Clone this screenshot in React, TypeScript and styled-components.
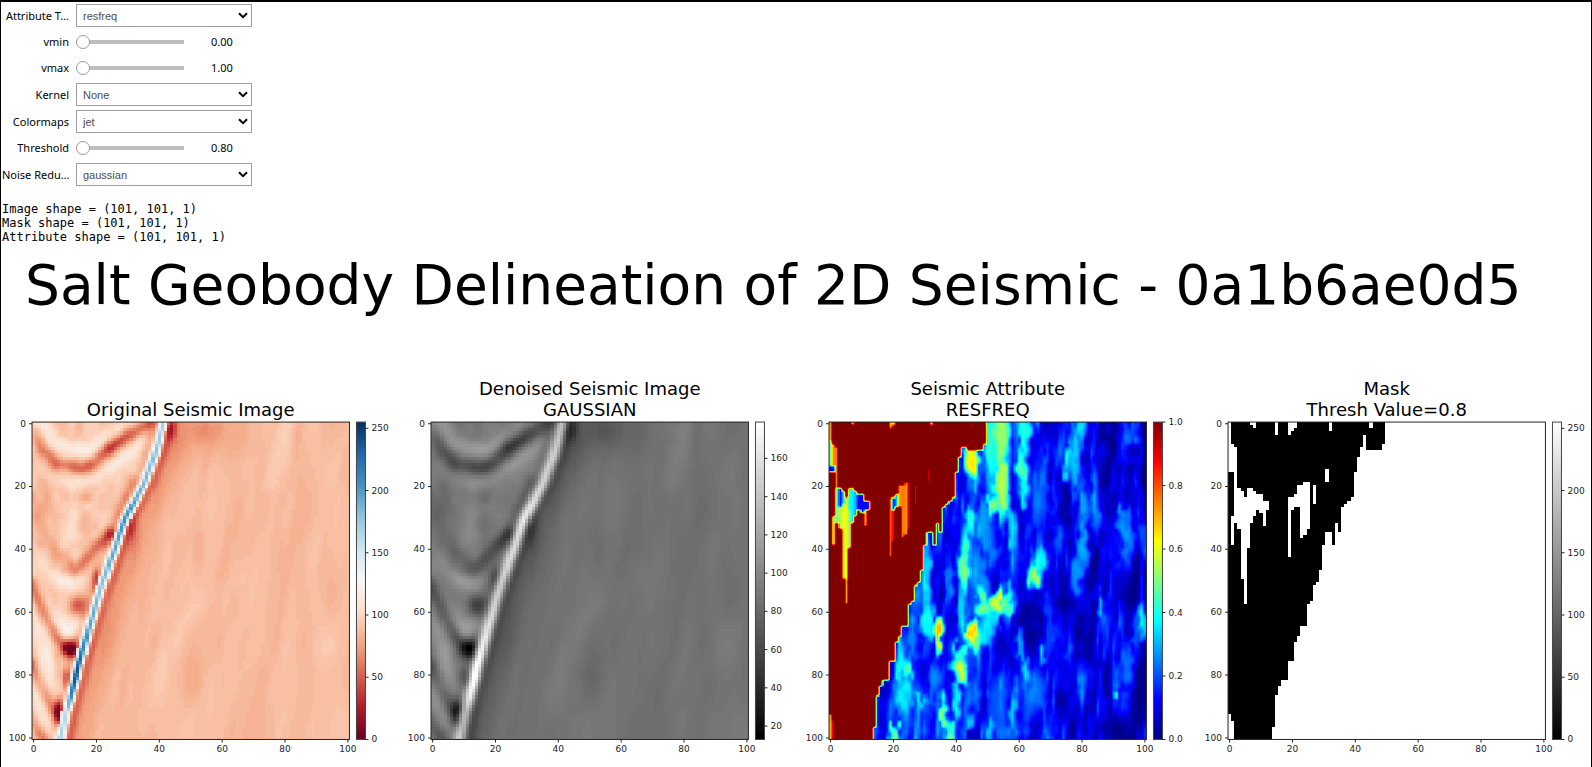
import React, { useState } from 'react';
import styled, { createGlobalStyle } from 'styled-components';

const GlobalStyle = createGlobalStyle`
  * { box-sizing: border-box; }
  body { margin: 0; background: #fff; color: #000; overflow-x: hidden; }
`;

const Page = styled.main`
  border: 1px solid #000;
  border-top-width: 2px;
  border-bottom: 0;
  min-height: 100vh;
`;

const Controls = styled.form`
  display: flex;
  flex-direction: column;
  gap: 4px;
  padding: 2px 0 0 1px;
`;

const ControlRow = styled.div<{ $slider?: boolean }>`
  display: flex;
  align-items: center;
  height: ${(p) => (p.$slider ? 22 : 23)}px;
`;

const ControlLabel = styled.label`
  width: 67px;
  margin-right: 7px;
  font: 11px/22px 'Noto Sans', sans-serif;
  text-align: right;
  white-space: nowrap;
`;

const SelectBox = styled.div`
  position: relative;
  width: 176px;
  height: 23px;
`;

const Select = styled.select`
  appearance: none;
  width: 100%;
  height: 100%;
  padding: 0 24px 0 6px;
  border: 1px solid #9e9e9e;
  border-radius: 0;
  background: #fff;
  color: #4d4d4d;
  font: 11px 'Liberation Sans', Arial, sans-serif;
`;

const Chevron = styled.svg`
  position: absolute;
  top: 8px;
  right: 4px;
  width: 10px;
  height: 7px;
  pointer-events: none;
`;

const Slider = styled.input`
  appearance: none;
  width: 108px;
  height: 14px;
  margin: 0;
  background: linear-gradient(#bdbdbd, #bdbdbd) center / 100% 4px no-repeat;
  &::-webkit-slider-thumb {
    appearance: none;
    width: 14px;
    height: 14px;
    border: 1px solid #9e9e9e;
    border-radius: 50%;
    background: #fff;
  }
`;

const Readout = styled.output`
  width: 76px;
  font: 11px/22px 'Noto Sans', sans-serif;
  text-align: center;
`;

const Log = styled.pre`
  margin: 16px 0 0 1px;
  font: 12px/14px 'DejaVu Sans Mono', monospace;
`;

const Title = styled.h1`
  margin: 8px 0 0 24px;
  font: 400 55px/66px 'DejaVu Sans', sans-serif;
  white-space: nowrap;
`;

const Figures = styled.section`
  display: grid;
  grid-template-columns: repeat(4, minmax(0, 1fr));
  gap: 4px;
  margin-top: 56px;
`;

const Figure = styled.svg`
  display: block;
  width: 100%;
  overflow: visible;
  font-family: 'DejaVu Sans', sans-serif;
`;

/* ---------- colour maps ---------- */

type Rgb = [number, number, number];
type ColorMap = (t: number) => Rgb;
const clamp = (v: number) => Math.max(0, Math.min(1, v));

const RDBU: Rgb[] = [
  [103, 0, 31], [178, 24, 43], [214, 96, 77], [244, 165, 130], [253, 219, 199], [247, 247, 247],
  [209, 229, 240], [146, 197, 222], [67, 147, 195], [33, 102, 172], [5, 48, 97],
];
const rdbu: ColorMap = (t) => {
  const p = clamp(t) * 10;
  const i = Math.min(9, Math.floor(p));
  return RDBU[i].map((c, k) => Math.round(c + (RDBU[i + 1][k] - c) * (p - i))) as Rgb;
};
const gray: ColorMap = (t) => {
  const g = Math.round(clamp(t) * 255);
  return [g, g, g];
};
const jet: ColorMap = (t) => {
  const v = clamp(t);
  const ramp = (peak: number) => Math.round(255 * clamp(1.5 - Math.abs(4 * v - peak)));
  return [ramp(3), ramp(2), ramp(1)];
};
const css = (c: Rgb) => `rgb(${c.join(',')})`;

/* ---------- data ---------- */

const N = 101;
type Grid = number[][];
type Knot = [number, number, number];
type Spot = [number, number, number, number, number];

const build = (f: (x: number, y: number) => number, n = N): Grid =>
  Array.from({ length: n }, (_, r) => Array.from({ length: n }, (_, c) => f(c, r)));

const hash = (x: number, y: number, s: number) => {
  const v = Math.sin(x * 127.1 + y * 311.7 + s * 74.7) * 43758.5453;
  return v - Math.floor(v);
};
const noise = (x: number, y: number, s: number) => {
  const xi = Math.floor(x), yi = Math.floor(y);
  const ease = (t: number) => t * t * (3 - 2 * t);
  const fx = ease(x - xi), fy = ease(y - yi);
  const a = hash(xi, yi, s) * (1 - fx) + hash(xi + 1, yi, s) * fx;
  const b = hash(xi, yi + 1, s) * (1 - fx) + hash(xi + 1, yi + 1, s) * fx;
  return a * (1 - fy) + b * fy;
};

// Amplitude of a ridge that follows a polyline of [x, y, amplitude] knots.
const ridge = (x: number, y: number, knots: Knot[], sigma: number) => {
  let best = Infinity, amp = 0;
  for (let i = 0; i < knots.length - 1; i++) {
    const [ax, ay, aa] = knots[i];
    const [bx, by, ba] = knots[i + 1];
    const dx = bx - ax, dy = by - ay;
    const t = clamp(((x - ax) * dx + (y - ay) * dy) / (dx * dx + dy * dy));
    const d = (x - ax - t * dx) ** 2 + (y - ay - t * dy) ** 2;
    if (d < best) { best = d; amp = aa + (ba - aa) * t; }
  }
  return amp * Math.exp(-best / (2 * sigma * sigma));
};
const spot = (x: number, y: number, [cx, cy, a, sx, sy]: Spot) =>
  a * Math.exp(-((x - cx) ** 2) / (2 * sx * sx) - (y - cy) ** 2 / (2 * sy * sy));
// Flat-topped variant of a spot.
const plateau = (x: number, y: number, [cx, cy, a, sx, sy]: Spot) => {
  const q = ((x - cx) / (1.7 * sx)) ** 2 + ((y - cy) / (1.7 * sy)) ** 2;
  return a * Math.exp(-(q ** 1.6));
};

const FAULT: Knot[] = [
  [41.8, 0, 80], [39.5, 9, 95], [35.7, 19.5, 100], [29.4, 31.2, 125], [26.2, 40.7, 105], [21.6, 53.5, 95],
  [18, 66, 112], [15.2, 75.7, 145], [13.9, 81, 160], [12.4, 87, 130], [10.8, 92.7, 75], [9, 101, 85],
];
const shifted = (dx: number, amp: number): Knot[] => FAULT.map(([x, y]) => [x + dx, y, amp]);

const REFLECTORS: [Knot[], number][] = [
  [[[2.9, 0, 26], [6.6, 6.3, 20], [11.9, 8.6, 28], [17.7, 9, 30], [21.4, 6.3, 20], [25.7, 3, 14], [30, 0, 10]], 1.7],
  [[[1.5, 3.6, -15], [3.4, 9, -28], [7.6, 13.2, -34], [12, 14, -32], [16.1, 15, -40], [20.4, 12.4, -36], [24.6, 8.4, -56], [30, 4.7, -46], [37.3, 0.5, -36]], 1.5],
  [[[2, 14, 2], [6.6, 18, 8], [13, 19.5, 12], [20.4, 18, 12], [24.6, 14.7, 20], [32, 9.6, 20], [34.5, 6, 16]], 1.4],
  [[[32, 19, -22], [28, 27, -14], [25, 34, -8]], 1.4],
  [[[4, 20, -8], [5, 29, -8]], 1.5],
  [[[13, 28, 5], [12, 38, 8]], 1.6],
  [[[0, 24, -14], [1.8, 31, -14], [5.5, 38.6, -12], [9.8, 44, -12], [14, 47, -34], [17.2, 44, -34], [21.4, 39, -36], [25, 35.8, -56]], 1.5],
  [[[0, 40, 6], [4.5, 47, 8], [8.7, 50.3, 22], [14, 52, 14], [18.2, 47.5, 8], [22.5, 43, 6]], 1.6],
  [[[0, 47, 4], [2.3, 53.4, 8], [6.6, 62, 14], [11.4, 66.5, 28], [15, 64, 18]], 1.6],
  [[[0, 51.3, -36], [3.4, 59.8, -30], [7.1, 67.3, -28], [11, 72, -36]], 1.3],
  [[[0, 60, 16], [2.3, 68, 20], [5.5, 78, 20], [9, 86, 16]], 1.8],
  [[[0, 76.8, -34], [2.9, 85, -28], [6.6, 91.7, -28], [8.7, 94, -24]], 1.3],
  [[[0, 84, 10], [2.9, 91.6, 14], [7, 100, 16]], 1.6],
  [[[0, 94, -12], [3.4, 101, -34]], 1.2],
  [[[80.5, 0, 9], [79, 10, 8], [76.5, 20, 6]], 2],
  [[[58, 54, 2], [48, 63, 4], [41.6, 76, 6], [36, 98, 4]], 2],
  [shifted(2.8, -28), 1.1],
  [shifted(6, -12), 2.8],
  [shifted(-2.8, -12), 1.1],
];
const SPOTS: Spot[] = [
  [16, 24, -14, 2.5, 1], [16, 33, -10, 1.6, 2], [20.4, 50.8, -48, 1, 3], [14.5, 58.2, -46, 2, 2],
  [12.4, 72.3, -95, 1.9, 1.9], [8.7, 92.2, -78, 1.1, 2.6], [44.3, 2.8, -28, 1.2, 2.2], [31.5, 34, -22, 1.6, 4],
  [11, 82, -38, 0.8, 3], [55, 2.5, -15, 3, 3], [47, 6, -8, 7, 6], [64, 4, -5, 8, 5], [66, 48, 6, 2, 5], [49, 49, 5, 2, 9],
  [51, 81, -6, 2.5, 6], [93.5, 52, -5, 2, 9], [53, 40, -5, 1.3, 6], [42.6, 53.5, -5, 1.6, 4], [84, 3.6, -6, 1.2, 4],
  [3, 84, 10, 2, 5], [8, 80, -12, 1, 4],
];

const seismic = build((c, r) => {
  const x = c + 0.5, y = r + 0.5;
  let v = 87 + (noise((x + y * 0.15) / 2.6, y / 14, 2) - 0.5) * 6 + (noise((x + y * 0.12) / 6, y / 24, 5) - 0.5) * 6;
  v += x > 80 ? 1 : 0;
  if (x < 41 - y * 0.33) v += 6 + (noise(x / 2.5, y / 3, 8) - 0.5) * 10;
  REFLECTORS.forEach(([k, s]) => { v += ridge(x, y, k, s); });
  SPOTS.forEach((s) => { v += spot(x, y, s); });
  const f = ridge(x, y, FAULT, 0.85);
  return Math.max(2, Math.min(255, Math.max(v, f > 22 ? 86 : 0) + f));
});

const KERNEL = [-2, -1, 0, 1, 2].map((d) => Math.exp((-d * d) / 2));
const denoised = build((c, r) => {
  let sum = 0, weight = 0;
  for (let dy = -2; dy <= 2; dy++) for (let dx = -2; dx <= 2; dx++) {
    const row = seismic[Math.max(0, Math.min(N - 1, r + dy))];
    const w = KERNEL[dx + 2] * KERNEL[dy + 2];
    sum += w * row[Math.max(0, Math.min(N - 1, c + dx))];
    weight += w;
  }
  return sum / weight;
});

// Right edge of the salt body: [first row below, column].
const EDGE: [number, number][] = [
  [8, 43], [11, 42], [16, 41], [24, 40], [25, 39], [26, 38], [27, 37], [35, 36], [37, 31], [39, 31], [47, 30], [51, 29],
  [52, 28], [57, 27], [58, 26], [65, 25], [68, 23], [70, 22], [76, 21], [82, 19], [84, 17], [87, 16], [97, 15], [101, 14],
];
// Gaps inside the salt body: [column, columns, first row, end row, attribute value].
const GAPS: [number, number, number, number, number][] = [
  [0, 1, 0, 6, 0.72], [0, 1, 6, 14, 0.5], [0, 2, 14, 16, 0.12], [1, 1, 7, 14, 0.74], [2, 1, 8, 21, 0.76], [2, 1, 21, 32, 0.5],
  [1, 1, 30, 39, 0.5], [3, 1, 21, 27, 0.12], [3, 1, 27, 34, 0.55], [4, 1, 22, 26, 0.35], [4, 1, 26, 50, 0.62],
  [5, 1, 24, 50, 0.6], [5, 1, 50, 58, 0.72], [6, 1, 21, 28, 0.38], [6, 1, 28, 40, 0.5], [7, 1, 21, 32, 0.36],
  [8, 1, 22, 30, 0.3], [9, 1, 23, 28, 0.12], [10, 1, 23, 29, 0.12], [11, 1, 25, 28, 0.1], [11, 1, 28, 33, 0.65],
  [12, 1, 25, 28, 0.15], [7, 1, 0, 1, 0.7], [8, 1, 0, 2, 1], [15, 1, 0, 4, 1], [19, 1, 0, 2, 0.7], [19, 1, 2, 4, 1],
  [20, 1, 0, 1, 0.6], [20, 1, 1, 3, 1], [21, 1, 0, 2, 1], [32, 1, 0, 1, 0.6], [32, 1, 1, 3, 1], [45, 1, 0, 2, 0.95],
  [31, 1, 15, 19, 0.93], [19, 1, 24, 43, 0.8], [20, 1, 24, 28, 0.1], [20, 1, 28, 38, 0.9], [21, 1, 23, 27, 0.32],
  [22, 1, 20, 27, 0.72], [23, 1, 20, 37, 0.76], [24, 1, 19, 36, 0.74], [25, 1, 19, 34, 1], [27, 1, 20, 26, 0.92],
  [0, 1, 93, 101, 0.7], [1, 1, 95, 101, 0.98],
];
const inSalt = (c: number, r: number) => {
  if (r < 9 && c >= 44 && c < (r < 7 ? 50 : 49)) return true;
  if (r < 4 && c < 50) return true;
  if (c === 34 && r >= 32) return false;
  if (c === 33 && r >= 35 && r < 39) return true;
  const step = EDGE.find(([end]) => r < end);
  return !!step && c < step[1];
};
const gapAt = (c: number, r: number) => GAPS.find(([g, w, a, b]) => c >= g && c < g + w && r >= a && r < b);
const hidden = (c: number, r: number) => c === 20 && r >= 28;
const mask = build((c, r) => (inSalt(c, r) && (!gapAt(c, r) || hidden(c, r)) ? 0 : 1));

const PATCHES: Spot[] = [
  [45.3, 13.2, 0.6, 1.3, 4], [54.8, 2, 0.5, 2, 9], [54.8, 18, 0.52, 1.6, 8], [52.3, 27, 0.46, 1.5, 2.2], [51.5, 6, 0.36, 1.5, 14],
  [62.3, 4, 0.38, 1.2, 7], [61.5, 14, 0.42, 1.2, 5], [62, 22, 0.34, 1.2, 3], [77.8, 12, 0.3, 1.1, 8], [80, 2.5, 0.3, 1.2, 4], [75.6, 14, 0.38, 1, 3],
  [58.6, 34, 0.32, 1.1, 4], [57.5, 29, 0.28, 1, 3], [43, 46, 0.42, 1.1, 7], [44.8, 31, 0.32, 1, 4], [65.5, 49.5, 0.5, 1.5, 3],
  [67, 44, 0.32, 1.3, 3], [53.8, 57.5, 0.58, 2, 2], [57, 57, 0.38, 1.4, 3], [49, 56, 0.44, 1.8, 2.6], [51, 60, 0.32, 3, 3],
  [45.3, 67, 0.6, 1.2, 2.6], [47.2, 70.5, 0.46, 0.9, 3], [34.7, 67.5, 0.66, 0.8, 3.4], [42, 79.5, 0.52, 1.4, 2.6], [41.5, 76, 0.4, 1.8, 3],
  [40.5, 88, 0.32, 0.9, 5], [25.3, 78.5, 0.44, 1.2, 3], [36.3, 91.7, 0.46, 1, 3], [38.4, 99, 0.4, 0.8, 2], [23.5, 87, 0.3, 1.8, 5],
  [29, 88.5, 0.27, 2.4, 2], [21, 99.5, 0.42, 1.5, 1.8], [31.3, 63, 0.34, 1.5, 5], [31, 48, 0.3, 0.9, 9],
  [22.5, 75, 0.32, 0.9, 8], [50, 66, 0.32, 1.4, 5], [51, 37, 0.22, 1.6, 7], [48.5, 32, 0.24, 1.2, 5], [81, 40, 0.26, 1.1, 7], [79, 48, 0.22, 2, 4],
  [93.5, 31, 0.22, 1.6, 3], [95.3, 39, 0.22, 1.3, 5], [95.8, 3.6, 0.2, 1.8, 3],
  [85, 25, 0.22, 1, 7], [100, 63, 0.36, 0.9, 4], [86, 59, 0.26, 0.8, 2.2], [91, 85, 0.32, 0.8, 1],
  [94.7, 77, 0.22, 1.4, 5], [68, 75, 0.3, 0.8, 2], [63, 79, 0.27, 0.9, 3], [61, 72, 0.26, 0.9, 3],
  [66, 86, 0.2, 2, 6], [59, 91.7, 0.26, 0.8, 6], [70, 64, 0.17, 1.2, 8], [51, 98, 0.28, 0.8, 3],
  [44.8, 95, 0.3, 0.8, 2.4], [67, 22, 0.18, 2, 9], [42, 60, 0.3, 0.9, 6], [48, 49, 0.22, 2, 5], [54, 92, 0.17, 2, 8],
  [26.5, 68, 0.2, 1.2, 6], [38, 50, 0.2, 0.8, 6], [34, 82, 0.18, 1.6, 5], [47, 17, 0.26, 1, 4],
];
const attribute = build((c, r) => {
  if (inSalt(c, r) || (r < 8 && c === 43)) {
    const gap = gapAt(c, r);
    return gap ? gap[4] : 1.15;
  }
  const x = c + 0.5, y = r + 0.5;
  const streak = noise((x + y * 0.06) / 1.3, y / 9, 11);
  const wide = noise(x / 3.5, y / 14, 3);
  let v = 0.01 + streak * streak * 0.18 + wide * wide * 0.14 + (noise(x / 1.4, y / 2.4, 7) - 0.5) * 0.07;
  if (x < 60) v += 0.04;
  if (x > 88) v -= 0.03;
  // The outlines of the patches are roughened with fine noise.
  const wx = x + (noise(x / 2, y / 3, 21) - 0.5) * 2;
  const wy = y + (noise(x / 1.4, y / 3, 22) - 0.5) * 7;
  const peak = PATCHES.reduce((m, p) => Math.max(m, plateau(wx, wy, p)), 0);
  return Math.max(0.01, Math.min(0.72, Math.max(v, peak + v * 0.4)));
});

// Bilinear resampling to `k` samples per cell.
const upsample = (g: Grid, k: number): Grid =>
  build((c, r) => {
    const x = Math.max(0, Math.min(N - 1, (c + 0.5) / k - 0.5));
    const y = Math.max(0, Math.min(N - 1, (r + 0.5) / k - 0.5));
    const xi = Math.min(N - 2, Math.floor(x)), yi = Math.min(N - 2, Math.floor(y));
    const fx = x - xi, fy = y - yi;
    return (g[yi][xi] * (1 - fx) + g[yi][xi + 1] * fx) * (1 - fy) + (g[yi + 1][xi] * (1 - fx) + g[yi + 1][xi + 1] * fx) * fy;
  }, N * k);

// One path for each colour level, made of horizontal runs of cells.
const LEVELS = 96;
const toPaths = (g: Grid, min: number, max: number, map: ColorMap) => {
  const paths: string[] = Array(LEVELS).fill('');
  const level = (v: number) => Math.round(clamp((v - min) / (max - min)) * (LEVELS - 1));
  g.forEach((row, r) => {
    let start = 0;
    for (let c = 1; c <= row.length; c++) {
      if (c === row.length || level(row[c]) !== level(row[start])) {
        paths[level(row[start])] += `M${start} ${r}H${c}V${r + 1}H${start}z`;
        start = c;
      }
    }
  });
  return paths.map((d, i) => ({ d, fill: css(map(i / (LEVELS - 1))) })).filter((p) => p.d);
};

interface Plot {
  title: string[];
  paths: { d: string; fill: string }[];
  cells: number;
  map: ColorMap;
  min: number;
  max: number;
  ticks: string[];
}

const PLOTS: Plot[] = [
  { title: ['Original Seismic Image'], paths: toPaths(seismic, 0, 255, rdbu), cells: N, map: rdbu, min: 0, max: 255, ticks: ['0', '50', '100', '150', '200', '250'] },
  { title: ['Denoised Seismic Image', 'GAUSSIAN'], paths: toPaths(denoised, 13, 179, gray), cells: N, map: gray, min: 13, max: 179, ticks: ['20', '40', '60', '80', '100', '120', '140', '160'] },
  { title: ['Seismic Attribute', 'RESFREQ'], paths: toPaths(upsample(attribute, 3), 0, 1, jet), cells: N * 3, map: jet, min: 0, max: 1, ticks: ['0.0', '0.2', '0.4', '0.6', '0.8', '1.0'] },
  { title: ['Mask', 'Thresh Value=0.8'], paths: toPaths(mask, 0, 1, gray), cells: N, map: gray, min: 0, max: 255, ticks: ['0', '50', '100', '150', '200', '250'] },
];

const LEFT = 31;
const TOP = 48;
const SIZE = 317;
const BAR = 355;
const AXIS = [0, 20, 40, 60, 80, 100];

function PlotFigure({ plot, id }: { plot: Plot; id: string }) {
  const at = (v: number) => ((v + 0.5) / N) * SIZE;
  const bottom = TOP + SIZE;
  return (
    <Figure viewBox="0 0 394 394" role="img" aria-label={plot.title.join(' ')}>
      <defs>
        <linearGradient id={id} x1="0" y1="1" x2="0" y2="0">
          {Array.from({ length: 33 }, (_, i) => (
            <stop key={i} offset={i / 32} stopColor={css(plot.map(i / 32))} />
          ))}
        </linearGradient>
      </defs>
      {plot.title.map((line, i) => (
        <text key={line} x={LEFT + SIZE / 2} y={TOP - 6 - 21 * (plot.title.length - 1 - i)} fontSize={18} textAnchor="middle">{line}</text>
      ))}
      <svg x={LEFT} y={TOP} width={SIZE} height={SIZE} viewBox={`0 0 ${plot.cells} ${plot.cells}`} shapeRendering="crispEdges">
        {plot.paths.map((p) => <path key={p.fill} d={p.d} fill={p.fill} />)}
      </svg>
      <rect x={LEFT} y={TOP} width={SIZE} height={SIZE} fill="none" stroke="#222" strokeWidth={1} />
      <rect x={BAR} y={TOP} width={9} height={SIZE} fill={`url(#${id})`} stroke="#444" strokeWidth={1} />
      <g stroke="#222" strokeWidth={1}>
        {AXIS.map((v) => (
          <path key={v} d={`M${LEFT} ${TOP + at(v)}h-3M${LEFT + at(v)} ${bottom}v3`} />
        ))}
      </g>
      <g fontSize={9} fill="#222">
        {AXIS.map((v) => (
          <React.Fragment key={v}>
            <text x={LEFT - 6} y={TOP + at(v) + 3} textAnchor="end">{v}</text>
            <text x={LEFT + at(v)} y={bottom + 13} textAnchor="middle">{v}</text>
          </React.Fragment>
        ))}
        {plot.ticks.map((t) => {
          const y = bottom - ((Number(t) - plot.min) / (plot.max - plot.min)) * SIZE;
          return (
            <React.Fragment key={t}>
              <path d={`M${BAR + 9} ${y}h3`} stroke="#222" />
              <text x={BAR + 15} y={y + 3}>{t}</text>
            </React.Fragment>
          );
        })}
      </g>
    </Figure>
  );
}

interface SelectFieldProps { id: string; label: string; options: string[] }

function SelectField({ id, label, options }: SelectFieldProps) {
  return (
    <ControlRow>
      <ControlLabel htmlFor={id}>{label}</ControlLabel>
      <SelectBox>
        <Select id={id}>
          {options.map((o) => <option key={o}>{o}</option>)}
        </Select>
        <Chevron viewBox="0 0 10 7" aria-hidden="true">
          <path d="M1 1.2 5 5.2 9 1.2" fill="none" stroke="#000" strokeWidth="2" />
        </Chevron>
      </SelectBox>
    </ControlRow>
  );
}

interface SliderFieldProps { id: string; label: string; min: number; max: number }

function SliderField({ id, label, min, max }: SliderFieldProps) {
  const [value, setValue] = useState(min);
  return (
    <ControlRow $slider>
      <ControlLabel htmlFor={id}>{label}</ControlLabel>
      <Slider id={id} type="range" min={min} max={max} step={0.01} value={value} onChange={(e) => setValue(Number(e.target.value))} />
      <Readout htmlFor={id}>{value.toFixed(2)}</Readout>
    </ControlRow>
  );
}

export default function App() {
  return (
    <Page>
      <GlobalStyle />
      <Controls>
        <SelectField id="attribute" label="Attribute T…" options={['resfreq']} />
        <SliderField id="vmin" label="vmin" min={0} max={1} />
        <SliderField id="vmax" label="vmax" min={1} max={10} />
        <SelectField id="kernel" label="Kernel" options={['None']} />
        <SelectField id="colormaps" label="Colormaps" options={['jet', 'gray']} />
        <SliderField id="threshold" label="Threshold" min={0.8} max={1} />
        <SelectField id="noise" label="Noise Redu…" options={['gaussian']} />
      </Controls>
      <Log>{'Image shape = (101, 101, 1)\nMask shape = (101, 101, 1)\nAttribute shape = (101, 101, 1)'}</Log>
      <Title>Salt Geobody Delineation of 2D Seismic - 0a1b6ae0d5</Title>
      <Figures>
        {PLOTS.map((plot, i) => <PlotFigure key={plot.title[0]} plot={plot} id={`scale-${i}`} />)}
      </Figures>
    </Page>
  );
}
